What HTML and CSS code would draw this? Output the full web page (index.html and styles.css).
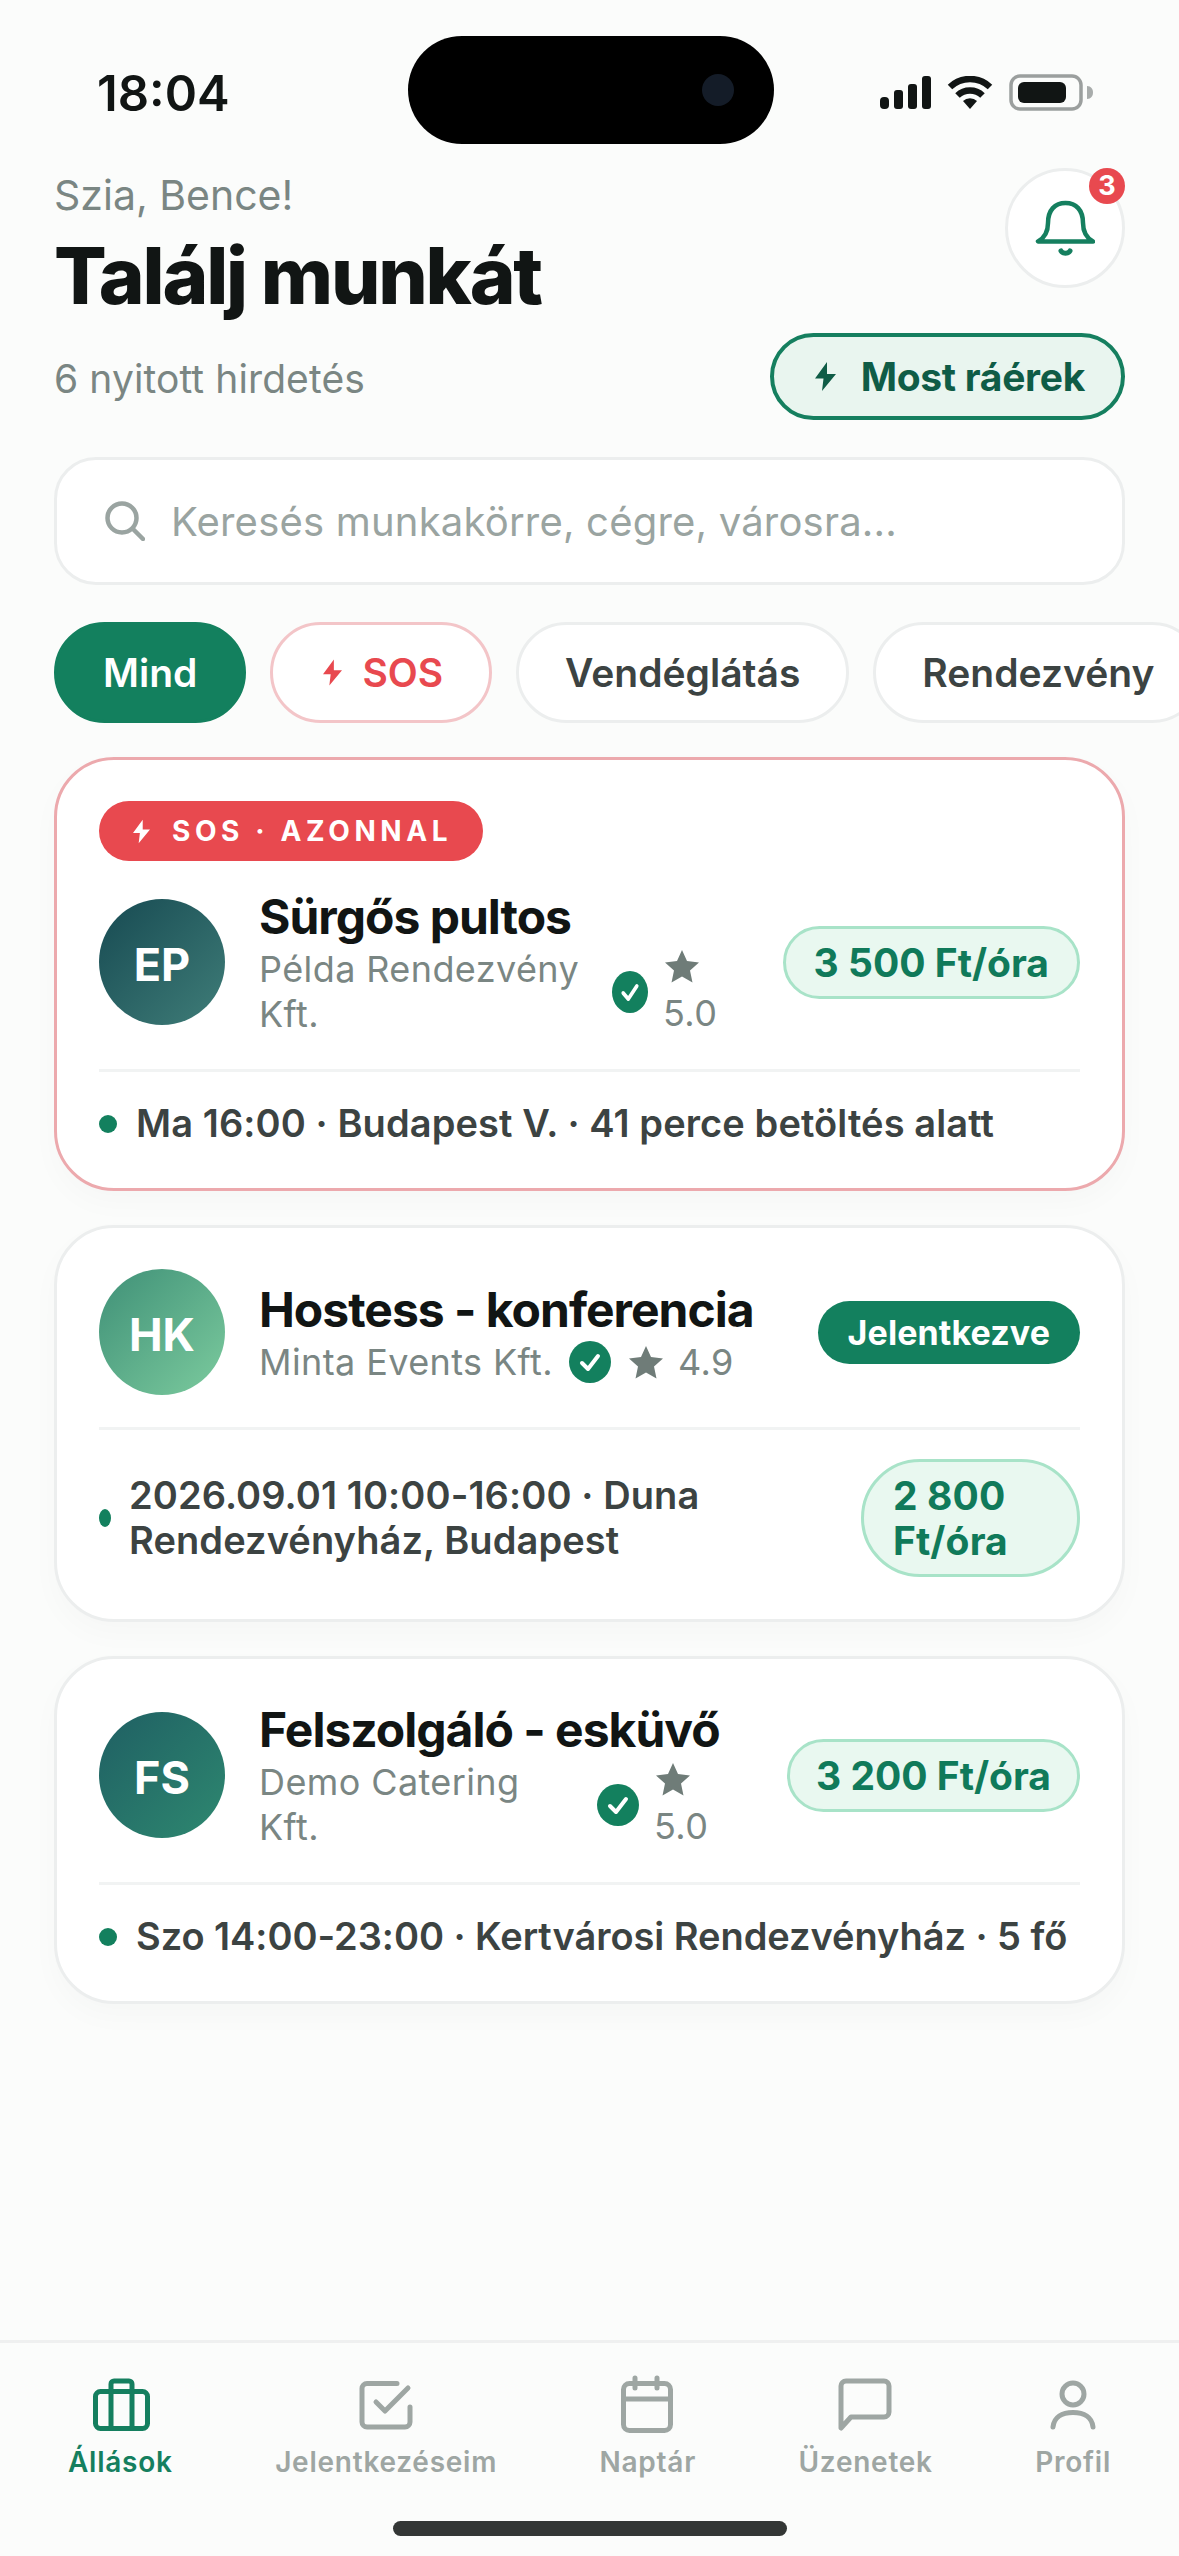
FILE: index.html
```html
<!DOCTYPE html>
<html lang="hu">
<head>
	<meta charset="utf-8">
	<title>Találj munkát</title>
	<link rel="stylesheet" href="styles.css">
</head>
<body>
<div class="page">

	<!-- status bar -->
	<div class="status">
		<div class="time">18:04</div>
		<div class="island"><span class="camera"></span></div>
		<div class="status-icons">
			<svg width="52" height="34" viewBox="0 0 52 34" fill="#111514">
				<rect x="1" y="21" width="9" height="12" rx="4"/>
				<rect x="15" y="14" width="9" height="19" rx="3"/>
				<rect x="29" y="8" width="9" height="25" rx="3"/>
				<rect x="43" y="0" width="9" height="33" rx="3"/>
			</svg>
			<svg class="wifi" width="46" height="34" viewBox="0 0 46 34" fill="none" stroke="#111514" stroke-width="6.5">
				<path d="M3 11a29 29 0 0 1 40 0"/>
				<path d="M10.500 19.500a18 18 0 0 1 25 0"/>
				<path d="M16 25a10 10 0 0 1 14 0l-7 8z" fill="#111514" stroke="none"/>
			</svg>
			<svg class="battery" width="86" height="38" viewBox="0 0 86 38">
				<rect x="2" y="2" width="70" height="33" rx="9" fill="none" stroke="#9b9f9e" stroke-width="3.500"/>
				<rect x="9" y="8" width="48" height="21" rx="6" fill="#111514"/>
				<path d="M78 12c4 0 6 3 6 6.500s-2 6.500-6 6.500z" fill="#a8acab"/>
			</svg>
		</div>
	</div>

	<main class="content">
		<header class="top">
			<div>
				<div class="hello">Szia, Bence!</div>
				<h1>Találj munkát</h1>
			</div>
			<div class="bell">
				<svg width="60" height="60" viewBox="0 0 60 60" fill="none" stroke="#157f5f" stroke-linecap="round" stroke-linejoin="round">
					<path d="M3 43.500H58C50 39 48 31 48 25C48 12 41 5 30.500 5C20 5 13 12 13 25C13 31 11 39 3 43.500Z" stroke-width="4.500"/>
					<path d="M26 53a5 4 0 0 0 9 0" stroke-width="5"/>
				</svg>
				<span class="bell-count">3</span>
			</div>
		</header>

		<div class="sub-row">
			<div class="open-count">6 nyitott hirdetés</div>
			<div class="free-btn">
				<svg width="21" height="29" viewBox="0 0 21 29"><path d="M12 0L0 16.500H8.500L7 29L21 12H12Z" fill="#0f5c46"/></svg>
				Most ráérek
			</div>
		</div>

		<div class="search">
			<svg width="40" height="40" viewBox="0 0 40 40" fill="none" stroke="#9aa4a1" stroke-width="4.500" stroke-linecap="round">
				<circle cx="17" cy="17" r="14.500"/>
				<path d="M28 28L38 38"/>
			</svg>
			<span>Keresés munkakörre, cégre, városra...</span>
		</div>

		<div class="chips">
			<div class="chip chip-on">Mind</div>
			<div class="chip chip-sos">
				<svg width="19" height="27" viewBox="0 0 21 29"><path d="M12 0L0 16.500H8.500L7 29L21 12H12Z" fill="#e8494f"/></svg>
				SOS
			</div>
			<div class="chip">Vendéglátás</div>
			<div class="chip">Rendezvény</div>
		</div>

		<div class="cards">
			<article class="card card-sos">
				<div class="sos-tag">
					<svg width="17" height="25" viewBox="0 0 21 29"><path d="M12 0L0 16.500H8.500L7 29L21 12H12Z" fill="#fff"/></svg>
					SOS · AZONNAL
				</div>
				<div class="job">
					<div class="avatar av-ep">EP</div>
					<div class="info">
						<div class="job-title">Sürgős pultos</div>
						<div class="company">
							<span class="co-name co-ep">Példa Rendezvény Kft.</span>
							<svg class="tick tick-narrow" viewBox="0 0 42 42" preserveAspectRatio="none"><circle cx="21" cy="21" r="21" fill="#13805e"/><path d="M13 22l6 6 10-13" fill="none" stroke="#fff" stroke-width="4" stroke-linecap="round" stroke-linejoin="round"/></svg>
							<span class="rating rating-stack">
								<svg class="star" viewBox="0 0 34 34"><path d="M17 1l5 11 12 1.500-9 8 2.500 12L17 27.500 6.500 33.500 9 21.500l-9-8L12 12z" fill="#6f7c78"/></svg>
								5.0
							</span>
						</div>
					</div>
					<div class="price">3 500 Ft/óra</div>
				</div>
				<div class="meta">
					<span class="dot"></span>
					<span class="meta-text">Ma 16:00 · Budapest V. · 41 perce betöltés alatt</span>
				</div>
			</article>

			<article class="card">
				<div class="job">
					<div class="avatar av-hk">HK</div>
					<div class="info">
						<div class="job-title">Hostess - konferencia</div>
						<div class="company">
							<span class="co-name">Minta Events Kft.</span>
							<svg class="tick" viewBox="0 0 42 42"><circle cx="21" cy="21" r="21" fill="#13805e"/><path d="M13 22l6 6 10-13" fill="none" stroke="#fff" stroke-width="4" stroke-linecap="round" stroke-linejoin="round"/></svg>
							<span class="rating">
								<svg class="star" viewBox="0 0 34 34"><path d="M17 1l5 11 12 1.500-9 8 2.500 12L17 27.500 6.500 33.500 9 21.500l-9-8L12 12z" fill="#6f7c78"/></svg>
								4.9
							</span>
						</div>
					</div>
					<div class="applied">Jelentkezve</div>
				</div>
				<div class="meta">
					<span class="dot dot-thin"></span>
					<span class="meta-text">2026.09.01 10:00-16:00 · Duna<br>Rendezvényház, Budapest</span>
					<div class="price price-tall">2 800<br>Ft/óra</div>
				</div>
			</article>

			<article class="card">
				<div class="job">
					<div class="avatar av-fs">FS</div>
					<div class="info">
						<div class="job-title">Felszolgáló - esküvő</div>
						<div class="company">
							<span class="co-name co-fs">Demo Catering Kft.</span>
							<svg class="tick" viewBox="0 0 42 42"><circle cx="21" cy="21" r="21" fill="#13805e"/><path d="M13 22l6 6 10-13" fill="none" stroke="#fff" stroke-width="4" stroke-linecap="round" stroke-linejoin="round"/></svg>
							<span class="rating rating-stack">
								<svg class="star" viewBox="0 0 34 34"><path d="M17 1l5 11 12 1.500-9 8 2.500 12L17 27.500 6.500 33.500 9 21.500l-9-8L12 12z" fill="#6f7c78"/></svg>
								5.0
							</span>
						</div>
					</div>
					<div class="price price-slim">3 200 Ft/óra</div>
				</div>
				<div class="meta meta-tight">
					<span class="dot"></span>
					<span class="meta-text">Szo 14:00-23:00 · Kertvárosi Rendezvényház · 5 fő</span>
				</div>
			</article>
		</div>
	</main>

	<!-- bottom tabs -->
	<nav class="tabbar">
		<div class="tabs">
			<div class="tab tab-on">
				<svg width="60" height="60" viewBox="0 0 60 60" fill="none" stroke="currentColor" stroke-width="5" stroke-linecap="round" stroke-linejoin="round">
					<rect x="5.500" y="16.500" width="52" height="37" rx="5"/>
					<path d="M21 53V9a3 3 0 0 1 3-3h15a3 3 0 0 1 3 3v44"/>
				</svg>
				<span>Állások</span>
			</div>
			<div class="tab">
				<svg width="60" height="60" viewBox="0 0 60 60" fill="none" stroke="currentColor" stroke-width="5" stroke-linecap="round" stroke-linejoin="round">
					<path d="M41 8.500H11a5 5 0 0 0-5 5V47a5 5 0 0 0 5 5H49a5 5 0 0 0 5-5V32"/>
					<path d="M20 27L29 36L52 13"/>
				</svg>
				<span>Jelentkezéseim</span>
			</div>
			<div class="tab">
				<svg width="60" height="60" viewBox="0 0 60 60" fill="none" stroke="currentColor" stroke-width="5" stroke-linecap="round" stroke-linejoin="round">
					<rect x="5.500" y="8.500" width="47" height="47" rx="6"/>
					<path d="M17 3V13M39 3V13M5.500 24H52.500"/>
				</svg>
				<span>Naptár</span>
			</div>
			<div class="tab">
				<svg width="60" height="60" viewBox="0 0 60 60" fill="none" stroke="currentColor" stroke-width="5" stroke-linecap="round" stroke-linejoin="round">
					<path d="M5 53V11a5 5 0 0 1 5-5h38a5 5 0 0 1 5 5v26a5 5 0 0 1-5 5H15Z"/>
				</svg>
				<span>Üzenetek</span>
			</div>
			<div class="tab">
				<svg width="60" height="60" viewBox="0 0 60 60" fill="none" stroke="currentColor" stroke-width="5" stroke-linecap="round" stroke-linejoin="round">
					<circle cx="30" cy="19" r="11"/>
					<path d="M10 52C11 42 19 37.500 30 37.500S49 42 50 52"/>
				</svg>
				<span>Profil</span>
			</div>
		</div>
		<div class="home-bar"></div>
	</nav>
</div>
</body>
</html>
```

FILE: styles.css
```css
* {
	box-sizing: border-box;
}

body {
	margin: 0;
	background: #fbfcfb;
	font-family: "Inter", "Liberation Sans", sans-serif;
	color: #111514;
}

.page {
	width: 1179px;
	height: 2556px;
	overflow: hidden;
	display: flex;
	flex-direction: column;
}

/* status bar */
.status {
	display: grid;
	grid-template-columns: 408px 366px 1fr;
	align-items: center;
	padding-top: 36px;
	height: 144px;
}

.time {
	padding-left: 97px;
	font-size: 49px;
	font-weight: 600;
	line-height: 60px;
	margin-top: 7px;
}

.island {
	height: 108px;
	background: #000;
	border-radius: 54px;
	display: flex;
	align-items: center;
	justify-content: flex-end;
	padding-right: 40px;
}

.camera {
	width: 32px;
	height: 32px;
	border-radius: 50%;
	background: #141c28;
}

.status-icons {
	display: flex;
	align-items: center;
	padding-left: 105px;
	gap: 16px;
	margin-top: 6px;
}

/* main */
.content {
	flex: 1;
	padding: 24px 54px 0;
}

.top {
	display: flex;
	justify-content: space-between;
	align-items: flex-start;
	height: 150px;
}

.hello {
	font-size: 41px;
	line-height: 54px;
	color: #7a8683;
}

h1 {
	margin: 12px 0 0;
	font-size: 78px;
	line-height: 84px;
	font-weight: 800;
	letter-spacing: -2.2px;
}

.bell {
	position: relative;
	width: 120px;
	height: 120px;
	background: #fff;
	border: 3px solid #eceeee;
	border-radius: 50%;
	display: flex;
	align-items: center;
	justify-content: center;
}

.bell-count {
	position: absolute;
	top: -3px;
	right: -3px;
	width: 36px;
	height: 36px;
	border-radius: 50%;
	background: #e8494f;
	color: #fff;
	font-size: 27px;
	font-weight: 700;
	line-height: 36px;
	text-align: center;
}

.sub-row {
	display: flex;
	justify-content: space-between;
	align-items: center;
	margin-top: 15px;
}

.open-count {
	padding-top: 3px;
	font-size: 39px;
	letter-spacing: .1px;
	color: #7a8683;
}

.free-btn {
	display: flex;
	align-items: center;
	gap: 25px;
	height: 87px;
	padding: 0 36px 0 41px;
	background: #e9f5ef;
	border: 4px solid #157f5f;
	border-radius: 44px;
	color: #0f5c46;
	font-size: 39px;
	font-weight: 700;
	letter-spacing: -.3px;
}

.search {
	display: flex;
	align-items: center;
	gap: 26px;
	height: 128px;
	margin-top: 37px;
	padding-left: 48px;
	background: #fff;
	border: 3px solid #eceeee;
	border-radius: 42px;
	font-size: 40px;
	letter-spacing: .2px;
	color: #9aa4a1;
}

.chips {
	display: flex;
	gap: 24px;
	margin-top: 37px;
}

.chip {
	flex: none;
	display: flex;
	align-items: center;
	gap: 20px;
	height: 101px;
	padding: 0 46px;
	background: #fff;
	border: 3px solid #eceeee;
	border-radius: 51px;
	font-size: 39px;
	font-weight: 600;
	color: #3c4342;
}

.chip-on {
	background: #13805e;
	border-color: #13805e;
	color: #fff;
}

.chip-sos {
	padding: 0 46px 0 50px;
	border-color: #f3c5c8;
	color: #e8494f;
}

/* cards */
.cards {
	display: flex;
	flex-direction: column;
	gap: 34px;
	margin-top: 34px;
}

.card {
	padding: 41px 42px 42px;
	background: #fff;
	border: 3px solid #eceeee;
	border-radius: 60px;
	box-shadow: 0 12px 30px rgba(0, 0, 0, .025);
}

.card-sos {
	border-color: #eca9ad;
}

.sos-tag {
	display: inline-flex;
	align-items: center;
	gap: 22px;
	height: 60px;
	padding: 0 31px 0 34px;
	background: #e8494f;
	border-radius: 30px;
	color: #fff;
	font-size: 28px;
	font-weight: 700;
	letter-spacing: 4.6px;
	vertical-align: top;
}

.card-sos .job {
	margin-top: 26px;
}

.job {
	display: flex;
	align-items: center;
}

.avatar {
	flex: none;
	width: 126px;
	height: 126px;
	border-radius: 50%;
	display: flex;
	align-items: center;
	justify-content: center;
	color: #fff;
	font-size: 45px;
	font-weight: 700;
	padding-top: 4px;
}

.av-ep {
	background: linear-gradient(135deg, #174a52, #3f7d78);
}

.av-hk {
	background: linear-gradient(135deg, #3f9077, #7ccb9e);
}

.av-fs {
	background: linear-gradient(135deg, #1f5f63, #2e8870);
}

.info {
	flex: 1;
	min-width: 0;
	margin-left: 34px;
}

.job-title {
	font-size: 48px;
	line-height: 60px;
	font-weight: 700;
	letter-spacing: -1px;
}

.company {
	display: flex;
	align-items: center;
	font-size: 36px;
	letter-spacing: .4px;
	line-height: 45px;
	color: #7a8683;
}

.co-ep {
	width: 337px;
}

.co-fs {
	width: 322px;
}

.tick {
	flex: none;
	width: 42px;
	height: 42px;
	margin: 0 18px 0 16px;
}

.tick-narrow {
	width: 36px;
}

.rating {
	display: inline-flex;
	align-items: center;
	gap: 15px;
}

.rating-stack {
	display: block;
	width: 60px;
	margin-left: -3px;
}

.star {
	display: inline-block;
	width: 34px;
	height: 34px;
	vertical-align: -3px;
}

.rating-stack .star {
	display: block;
	margin-bottom: 8px;
	margin-left: 2px;
}

.price {
	flex: none;
	padding: 11px 28px;
	background: #e9f8f0;
	border: 3px solid #a8e3c8;
	border-radius: 40px;
	color: #107a5a;
	font-size: 39px;
	line-height: 45px;
	font-weight: 700;
	white-space: nowrap;
}

.price-slim {
	padding: 11px 26px;
}

.price-tall {
	width: 219px;
	margin-left: auto;
	padding-left: 29px;
	border-radius: 60px;
}

.applied {
	flex: none;
	height: 63px;
	padding: 0 30px;
	background: #13805e;
	border-radius: 32px;
	color: #fff;
	font-size: 34px;
	letter-spacing: .1px;
	line-height: 63px;
	font-weight: 700;
}

.meta {
	display: flex;
	align-items: center;
	margin-top: 32px;
	padding-top: 29px;
	border-top: 3px solid #f1f3f3;
	font-size: 38px;
	letter-spacing: .1px;
	line-height: 45px;
	font-weight: 600;
	color: #3c4342;
}

.meta-tight {
	letter-spacing: -.05px;
}

.dot {
	flex: none;
	width: 18px;
	height: 18px;
	margin-right: 19px;
	border-radius: 50%;
	background: #13805e;
}

.dot-thin {
	width: 12px;
	margin-right: 18px;
}

/* tabs */
.tabbar {
	flex: none;
	height: 216px;
	border-top: 3px solid #eff0f0;
	background: #fbfcfb;
}

.tabs {
	display: flex;
	justify-content: space-between;
	padding: 32px 68px 0;
}

.tab {
	display: flex;
	flex-direction: column;
	align-items: center;
	gap: 9px;
	font-size: 28px;
	line-height: 36px;
	font-weight: 600;
	letter-spacing: .75px;
	color: #9ea6a3;
}

.tab-on {
	color: #157f5f;
}

.home-bar {
	width: 394px;
	height: 15px;
	margin: 41px auto 0;
	background: #333635;
	border-radius: 8px;
}
```
